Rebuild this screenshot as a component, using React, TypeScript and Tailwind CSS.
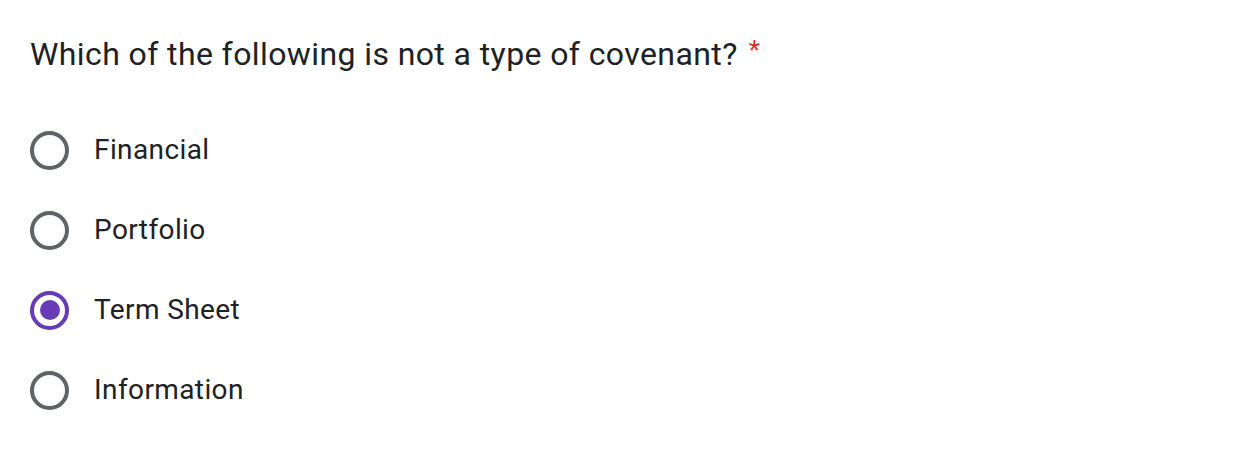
import React from "react";

const options = ["Financial", "Portfolio", "Term Sheet", "Information"];
const selected = "Term Sheet";

function Radio({ checked }: { checked: boolean }) {
  return (
    <div
      className={
        "flex h-[39px] w-[39px] shrink-0 items-center justify-center rounded-full border-[4px] " +
        (checked ? "border-[#673ab7]" : "border-[#5f6368]")
      }
    >
      {checked && <div className="h-[20px] w-[20px] rounded-full bg-[#673ab7]" />}
    </div>
  );
}

export default function App() {
  return (
    <div className="h-[466px] w-[1236px] bg-white pl-[30px] pt-[30px] font-['Roboto',sans-serif] text-[#202124]">
      <div className="flex items-start">
        <span className="text-[32px] leading-[48px] tracking-[0.4px]">
          Which of the following is not a type of covenant?
        </span>
        <span className="ml-[11px] mt-[7px] text-[26px] leading-[26px] text-[#d93025]">*</span>
      </div>
      <div className="mt-[32px] flex flex-col">
        {options.map((o) => (
          <div key={o} className="flex h-[80px] items-center">
            <Radio checked={o === selected} />
            <span className="ml-[25px] text-[28px] tracking-[0.4px]">{o}</span>
          </div>
        ))}
      </div>
    </div>
  );
}
